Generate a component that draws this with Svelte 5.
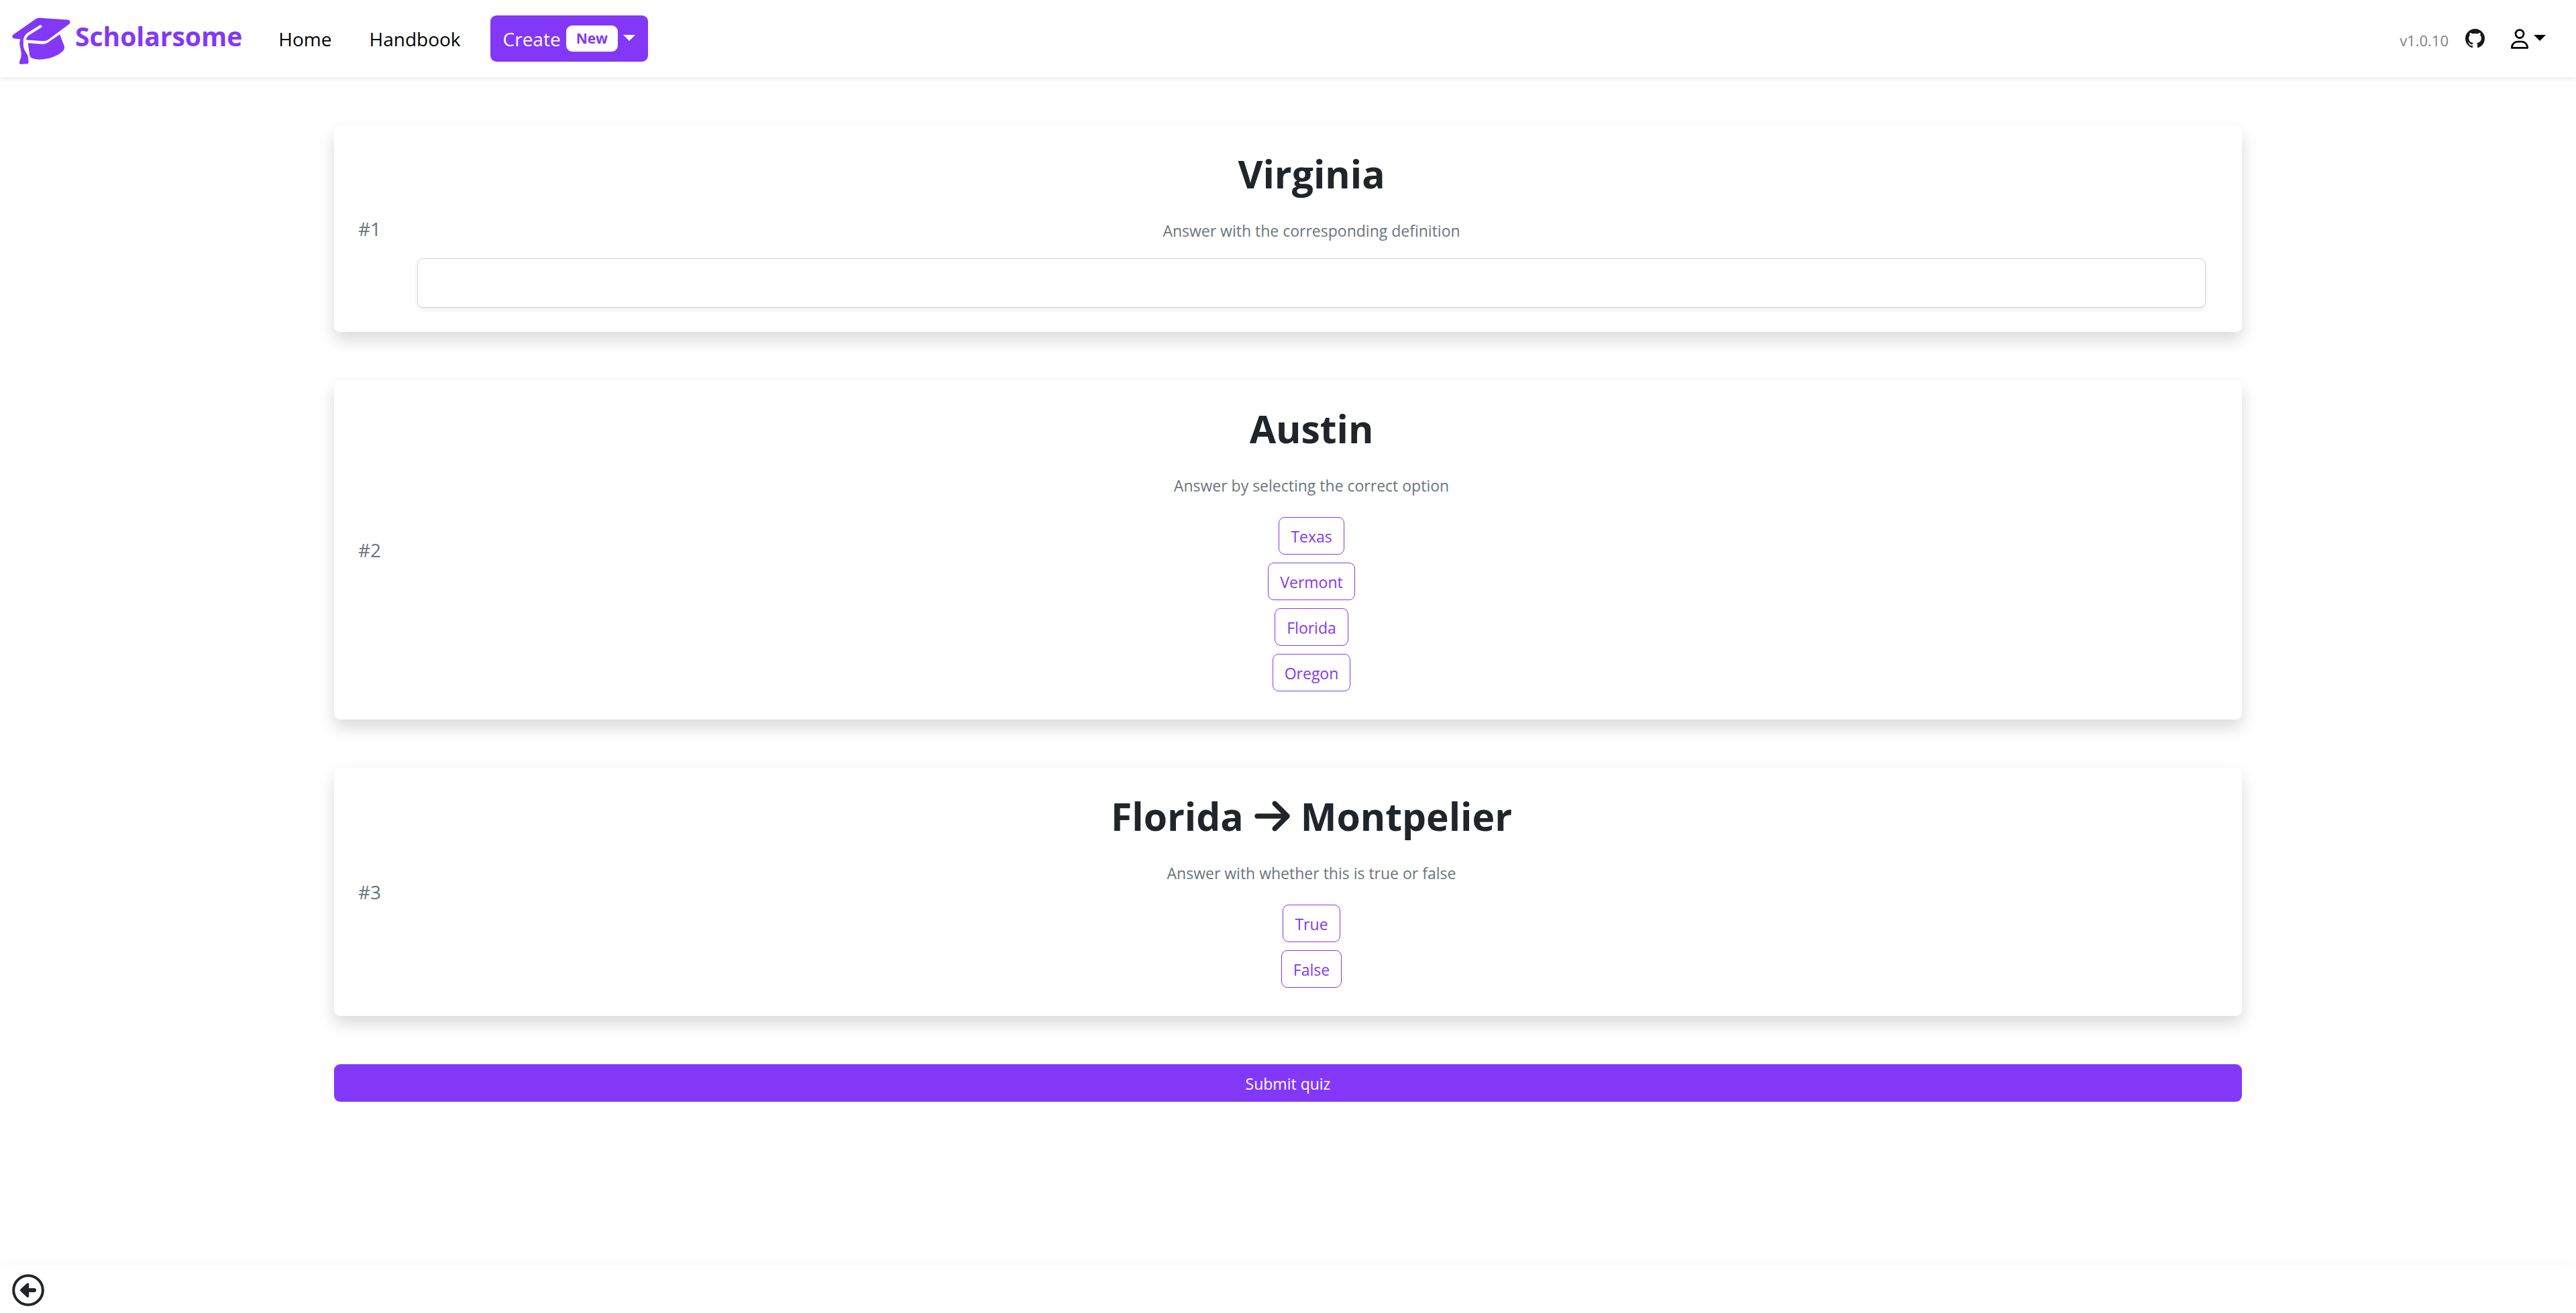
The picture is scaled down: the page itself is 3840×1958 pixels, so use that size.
<script>
  const questions = [
    { kind: 'text', title: ['Virginia'], hint: 'Answer with the corresponding definition' },
    {
      kind: 'choice',
      title: ['Austin'],
      hint: 'Answer by selecting the correct option',
      options: ['Texas', 'Vermont', 'Florida', 'Oregon']
    },
    {
      kind: 'choice',
      title: ['Florida', 'Montpelier'],
      hint: 'Answer with whether this is true or false',
      options: ['True', 'False']
    }
  ];
  let answers = $state(['', '', '']);
</script>

<div class="app">
  <header>
    <a class="brand" href="#home">
      <svg class="cap" viewBox="53 77 262 209" aria-hidden="true">
        <path d="M58 154 L158 84 Q168 77 180 78 L303 87 Q311 88 314 95 Q315 102 307 108 L215 176 Q205 183 192 182 L117 177 L104 185 Q102 205 107 218 C112 232 126 243 126 264 L127 277 Q127 285 118 285 L94 286 Q83 286 86 276 C91 263 95 252 94 236 C93 215 86 205 87 188 L90 174 L63 171 Q47 166 58 154Z" />
        <path d="M124 191 L185 196 Q200 197 210 191 L267 152 L287 204 Q291 216 282 226 C260 250 215 265 176 265 Q155 265 142 259 Q133 255 132 246Z" />
        <path class="cord" d="M181 116 L128 149 Q111 161 109 180" />
      </svg>
      <span>Scholarsome</span>
    </a>
    <nav>
      <a href="#home">Home</a>
      <a href="#handbook">Handbook</a>
    </nav>
    <button class="create" type="button">
      <span>Create</span>
      <span class="badge">New</span>
      <span class="caret"></span>
    </button>
    <div class="tools">
      <span class="version">v1.0.10</span>
      <a class="github" href="#github" aria-label="GitHub">
        <svg viewBox="0 0 16 16" aria-hidden="true">
          <path d="M8 0C3.58 0 0 3.58 0 8c0 3.54 2.29 6.53 5.47 7.59.4.07.55-.17.55-.38 0-.19-.01-.82-.01-1.49-2.01.37-2.53-.49-2.69-.94-.09-.23-.48-.94-.82-1.13-.28-.15-.68-.52-.01-.53.63-.01 1.08.58 1.23.82.72 1.21 1.87.87 2.33.66.07-.52.28-.87.51-1.07-1.78-.2-3.64-.89-3.64-3.95 0-.87.31-1.59.82-2.15-.08-.2-.36-1.02.08-2.12 0 0 .67-.21 2.2.82.64-.18 1.32-.27 2-.27.68 0 1.36.09 2 .27 1.53-1.04 2.2-.82 2.2-.82.44 1.1.16 1.92.08 2.12.51.56.82 1.27.82 2.15 0 3.07-1.87 3.75-3.65 3.95.29.25.54.73.54 1.48 0 1.07-.01 1.93-.01 2.2 0 .21.15.46.55.38A8.012 8.012 0 0 0 16 8c0-4.42-3.58-8-8-8z" />
        </svg>
      </a>
      <button class="account" type="button" aria-label="Account">
        <svg viewBox="0 0 448 512" aria-hidden="true">
          <path d="M304 128a80 80 0 1 0 -160 0 80 80 0 1 0 160 0zM96 128a128 128 0 1 1 256 0A128 128 0 1 1 96 128zM49.3 464H398.7c-8.9-63.3-63.3-112-129-112H178.3c-65.7 0-120.1 48.7-129 112zM0 482.3C0 383.8 79.8 304 178.3 304h91.4C368.2 304 448 383.8 448 482.3c0 16.4-13.3 29.7-29.7 29.7H29.7C13.3 512 0 498.7 0 482.3z" />
        </svg>
        <span class="caret"></span>
      </button>
    </div>
  </header>

  <main>
    {#each questions as question, i}
      <section class="card">
        <span class="number">#{i + 1}</span>
        <div class="body">
          <h1>
            {#each question.title as part, p}
              {#if p > 0}
                <svg class="arrow" viewBox="0 0 448 512" aria-hidden="true">
                  <path d="M438.6 278.6c12.5-12.5 12.5-32.8 0-45.3l-160-160c-12.5-12.5-32.8-12.5-45.3 0s-12.5 32.8 0 45.3L338.8 224 32 224c-17.7 0-32 14.3-32 32s14.3 32 32 32l306.7 0L233.4 393.4c-12.5 12.5-12.5 32.8 0 45.3s32.8 12.5 45.3 0l160-160z" />
                </svg>
              {/if}
              <span>{part}</span>
            {/each}
          </h1>
          <p id="hint-{i}">{question.hint}</p>
          {#if question.kind === 'text'}
            <input type="text" aria-labelledby="hint-{i}" bind:value={answers[i]} />
          {:else}
            <div class="options">
              {#each question.options as option}
                <button
                  type="button"
                  class="option"
                  class:chosen={answers[i] === option}
                  onclick={() => (answers[i] = option)}>{option}</button>
              {/each}
            </div>
          {/if}
        </div>
      </section>
    {/each}
    <button class="submit" type="submit">Submit quiz</button>
  </main>

  <footer>
    <button class="back" type="button" aria-label="Back">
      <svg viewBox="0 0 48 48" aria-hidden="true">
        <circle cx="24" cy="24" r="21.8" />
        <path d="M12.6 22.6 L22 13.8 Q23.3 12.8 24.6 13.8 Q25.2 14.4 25.2 15.4 V21 H33.2 Q36 21.2 36 24 Q36 26.8 33.2 27 H25.2 V32.6 Q25.2 33.6 24.6 34.2 Q23.3 35.2 22 34.2 L12.6 25.4 Q11.4 24 12.6 22.6Z" />
      </svg>
    </button>
  </footer>
</div>

<style>
  :global(body) {
    margin: 0;
    background: #fff;
    color: #212529;
    font-family: 'Open Sans', 'Noto Sans', sans-serif;
    font-size: 23px;
  }
  .app {
    min-height: 100vh;
    display: flex;
    flex-direction: column;
    --accent: #8338f7;
  }
  svg {
    display: block;
    fill: currentColor;
  }
  a {
    color: inherit;
    text-decoration: none;
  }
  button,
  input {
    font: inherit;
    box-sizing: border-box;
    margin: 0;
  }
  button {
    border: 0;
    background: none;
    color: inherit;
    cursor: pointer;
  }

  header {
    display: flex;
    align-items: center;
    box-sizing: border-box;
    min-height: 115px;
    padding: 0 45px 0 18px;
    background: #fff;
    color: #000;
    box-shadow: 0 3px 6px rgba(0, 0, 0, 0.075);
    font-size: 28px;
    line-height: 40px;
  }
  .brand {
    display: flex;
    align-items: center;
    gap: 7px;
    color: var(--accent);
    font-size: 39px;
    font-weight: 700;
  }
  .brand span {
    padding-bottom: 7px;
  }
  .cap {
    width: 87px;
    height: 70px;
    margin-top: 6px;
  }
  .cord {
    fill: none;
    stroke: #fff;
    stroke-width: 12;
    stroke-linecap: round;
  }
  nav {
    display: flex;
    gap: 56px;
    padding: 0 44px 0 54px;
  }
  .create {
    display: flex;
    align-items: center;
    gap: 8px;
    height: 69px;
    padding: 0 19px;
    border-radius: 9px;
    background: var(--accent);
    color: #fff;
  }
  .badge {
    padding: 0 15px;
    border-radius: 9px;
    background: #fff;
    color: var(--accent);
    font-size: 21px;
    font-weight: 700;
    line-height: 39px;
  }
  .caret {
    border: 9px solid transparent;
    border-top-color: currentColor;
    border-bottom: 0;
    margin-bottom: 3px;
  }
  .tools {
    display: flex;
    align-items: center;
    margin-left: auto;
  }
  .version {
    color: #808080;
    font-size: 22px;
    padding-top: 4px;
  }
  .github {
    margin: 0 39px 0 25px;
    color: #191717;
  }
  .github svg {
    width: 29px;
    height: 29px;
  }
  .account {
    display: flex;
    align-items: center;
    gap: 8px;
    padding: 0;
  }
  .account svg {
    width: 26px;
    height: 30px;
  }

  main {
    flex: 1;
    display: flex;
    flex-direction: column;
    gap: 72px;
    box-sizing: border-box;
    width: 75%;
    margin: 0 auto;
    padding: 72px 18px;
  }
  .card {
    display: flex;
    align-items: center;
    box-sizing: border-box;
    padding: 36px 54px 36px 36px;
    border-radius: 9px;
    background: #fff;
    box-shadow: 0 12px 24px rgba(0, 0, 0, 0.15);
  }
  .number {
    flex: 0 0 88px;
    color: #6c757d;
    font-size: 28px;
    line-height: 36px;
  }
  .body {
    flex: 1;
    text-align: center;
  }
  h1 {
    display: flex;
    justify-content: center;
    align-items: center;
    gap: 16px;
    margin: 0;
    font-size: 57px;
    line-height: 72px;
    font-weight: 700;
  }
  .arrow {
    width: 53px;
    height: 60px;
  }
  p {
    margin: 31px 0 23px;
    color: #6c757d;
    line-height: 36px;
  }
  input {
    display: block;
    width: 100%;
    height: 74px;
    padding: 0 18px;
    border: 1px solid #ced4da;
    border-radius: 9px;
    background: #fff;
    box-shadow: 0 3px 6px rgba(0, 0, 0, 0.075);
  }
  .options {
    display: flex;
    flex-direction: column;
    align-items: center;
    gap: 12px;
    padding: 6px 0;
  }
  .option {
    height: 56px;
    padding: 2px 17px 0;
    border: 1px solid var(--accent);
    border-radius: 9px;
    color: var(--accent);
  }
  .chosen {
    background: var(--accent);
    color: #fff;
  }
  .submit {
    height: 56px;
    padding-top: 2px;
    border-radius: 9px;
    background: var(--accent);
    color: #fff;
  }

  footer {
    padding: 14px 18px 10px;
    background: #fff;
    box-shadow: 0 12px 24px rgba(0, 0, 0, 0.15);
  }
  .back {
    display: block;
    padding: 0;
  }
  .back svg {
    width: 48px;
    height: 48px;
  }
  .back circle {
    fill: none;
    stroke: currentColor;
    stroke-width: 4;
  }
</style>
